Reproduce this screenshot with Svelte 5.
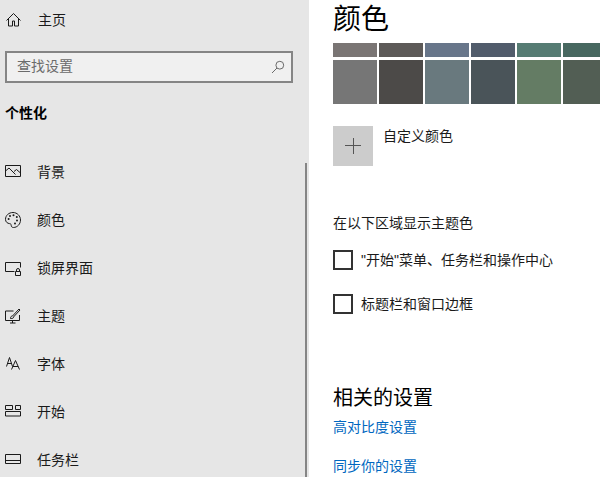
<script>
  const navItems = [
    { label: '背景', icon: 'picture' },
    { label: '颜色', icon: 'palette' },
    { label: '锁屏界面', icon: 'lock' },
    { label: '主题', icon: 'theme' },
    { label: '字体', icon: 'font' },
    { label: '开始', icon: 'start' },
    { label: '任务栏', icon: 'taskbar' }
  ];
  const topRow = ['#7a7574', '#5d5a58', '#68768a', '#515c6b', '#567c73', '#486860'];
  const bottomRow = ['#767676', '#4c4a48', '#69797e', '#4a5459', '#647c64', '#525e54'];
  const checks = ['"开始"菜单、任务栏和操作中心', '标题栏和窗口边框'];
</script>

<div class="window">
  <aside class="sidebar">
    <div class="home">
      <svg class="icon" viewBox="0 0 16 16" aria-hidden="true">
        <path d="M1.500 8.500 8.500 1.500l7 7M3.500 7v7h4v-5h2v5h4V7" />
      </svg>
      <span>主页</span>
    </div>
    <div class="search">
      <span>查找设置</span>
      <svg viewBox="0 0 14 14" aria-hidden="true">
        <circle cx="8.800" cy="5.200" r="3.900" />
        <path d="M6 8 1 13" />
      </svg>
    </div>
    <h2>个性化</h2>
    <nav>
      {#each navItems as item}
        <div class="nav-item">
          <svg class="icon" viewBox="0 0 16 16" aria-hidden="true">
            {#if item.icon === 'picture'}
              <path d="M.5 1.500h15v11H.5zM.5 7l3.500-3 6.500 6.500M9 7.500l2.500-2 4 3.500" />
            {:else if item.icon === 'palette'}
              <path d="M8 .5C3.800.5.500 3.400.500 7.400c0 2.600 2 4 4 4.200 1.600.2 1.700 1 1.700 1.700 0 1.300.8 2.200 2.200 2.200 4 0 7.100-3.500 7.100-7.500S12.200.5 8 .5z" />
              <g class="dots">
                <circle cx="3.600" cy="7" r="1" /><circle cx="5" cy="4" r="1" /><circle cx="8.500" cy="3.200" r="1" />
                <circle cx="11.800" cy="5" r="1" /><circle cx="12" cy="8.500" r="1" /><circle cx="10" cy="11.500" r="1" />
              </g>
            {:else if item.icon === 'lock'}
              <path d="M9.500 11.500H.5v-9h15v5M10.500 11.500h5v4h-5zM11.500 11.500V10a1.500 1.500 0 0 1 3 0v1.500" />
            {:else if item.icon === 'theme'}
              <path d="M8.500 3H.5v9.500h14V7M5 15h5.500M7.500 12.500V15M5.500 10.500c0-2 1-2.500 2-2.500l6.500-7 1 1-6.500 7c0 1.500-1 1.500-3 1.500z" />
            {:else if item.icon === 'font'}
              <path d="M1.500 10.500 4.500 1.500l3 9M2.500 7.500h4M6.500 13.500 10.500 4.500l4 9M7.800 10.500h5.400" />
            {:else if item.icon === 'start'}
              <path d="M.5 1.500h7v4h-7zM10.500 1.500h5v4h-5zM.5 7.500h15v4.500H.5z" />
            {:else}
              <path d="M.5 2.500h15v9H.5zM.5 8.500h15" />
            {/if}
          </svg>
          <span>{item.label}</span>
        </div>
      {/each}
    </nav>
    <div class="scrollbar"></div>
  </aside>

  <main class="content">
    <h1>颜色</h1>
    <div class="swatches short">
      {#each topRow as c}
        <div style="background:{c}"></div>
      {/each}
    </div>
    <div class="swatches tall">
      {#each bottomRow as c}
        <div style="background:{c}"></div>
      {/each}
    </div>
    <div class="custom">
      <div class="plus">
        <svg viewBox="0 0 16 16" aria-hidden="true"><path d="M8.500 0v16M0 7.500h16" /></svg>
      </div>
      <span>自定义颜色</span>
    </div>
    <p class="label">在以下区域显示主题色</p>
    {#each checks as text}
      <div class="check">
        <span class="box"></span>
        <span class="check-text">{text}</span>
      </div>
    {/each}
    <h3>相关的设置</h3>
    <a href="#contrast">高对比度设置</a>
    <a href="#sync">同步你的设置</a>
  </main>
</div>

<style>
  :global(body) { margin: 0; background: #fff; }
  .window {
    display: flex;
    width: 600px;
    height: 477px;
    overflow: hidden;
    font-family: "Liberation Sans", "Noto Sans CJK SC", sans-serif;
    font-size: 14px;
    color: #1a1a1a;
  }
  .sidebar {
    position: relative;
    flex: 0 0 309px;
    height: 477px;
    box-sizing: border-box;
    padding-left: 5px;
    background: #e6e6e6;
    overflow: hidden;
  }
  .icon {
    flex: none;
    width: 16px;
    height: 16px;
    fill: none;
    stroke: #1a1a1a;
    stroke-width: 1;
  }
  .home {
    display: flex;
    align-items: center;
    gap: 17px;
    height: 20px;
    margin-top: 10px;
  }
  .home span, .nav-item span { padding-bottom: 2px; }
  .search {
    display: flex;
    align-items: center;
    justify-content: space-between;
    box-sizing: border-box;
    width: 288px;
    height: 32px;
    margin-top: 21px;
    padding: 0 6px 0 10px;
    border: 2px solid #858585;
    background: #f0f0f0;
    color: #6b6b6b;
  }
  .search span { padding-bottom: 4px; }
  .search svg {
    width: 14px;
    height: 14px;
    fill: none;
    stroke: #6b6b6b;
  }
  h2 {
    margin: 20px 0 0;
    font-size: 14px;
    line-height: 20px;
    font-weight: 700;
    color: #000;
  }
  nav {
    display: flex;
    flex-direction: column;
    margin-top: 25px;
  }
  .nav-item {
    display: flex;
    align-items: center;
    gap: 16px;
    height: 48px;
    flex: none;
  }
  .dots circle { fill: #1a1a1a; stroke: none; }
  .scrollbar {
    position: absolute;
    left: 305px;
    top: 163px;
    bottom: 0;
    width: 2px;
    background: #858585;
  }
  .content {
    flex: 1;
    padding-left: 24px;
    min-width: 0;
    overflow: hidden;
  }
  h1 {
    margin: 0;
    height: 43px;
    font-size: 28px;
    line-height: 39px;
    font-weight: 400;
    color: #000;
  }
  .swatches {
    display: flex;
    gap: 2px;
    width: 280px;
  }
  .swatches div { flex: 0 0 44px; }
  .short { height: 14px; }
  .tall { height: 44px; margin-top: 3px; }
  .custom {
    display: flex;
    gap: 10px;
    margin-top: 22px;
    line-height: 20px;
  }
  .plus {
    display: flex;
    align-items: center;
    justify-content: center;
    width: 40px;
    height: 40px;
    background: #cccccc;
  }
  .plus svg {
    width: 16px;
    height: 16px;
    fill: none;
    stroke: #555;
  }
  .label {
    margin: 47px 0 0;
    line-height: 20px;
  }
  .check {
    display: flex;
    align-items: center;
    gap: 8px;
    height: 20px;
    margin-top: 17px;
  }
  .check + .check { margin-top: 24px; }
  .check-text { padding-bottom: 2px; }
  .box {
    box-sizing: border-box;
    width: 20px;
    height: 20px;
    border: 2px solid #333;
  }
  h3 {
    margin: 70px 0 0;
    font-size: 20px;
    line-height: 28px;
    font-weight: 400;
    color: #000;
  }
  a {
    display: block;
    line-height: 20px;
    color: #0067c0;
    text-decoration: none;
    margin-top: 19px;
  }
  h3 + a { margin-top: 5px; }
</style>
